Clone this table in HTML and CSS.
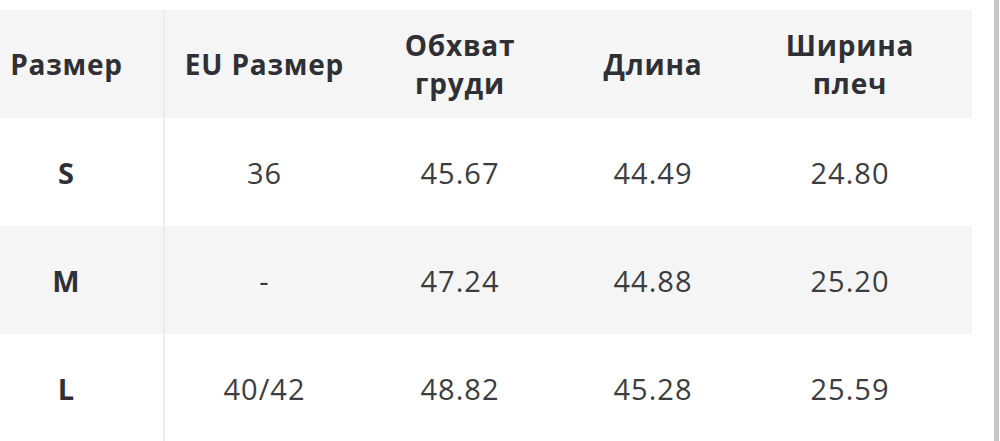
FILE: index.html
```html
<!DOCTYPE html>
<html lang="ru">
<head>
<meta charset="utf-8">
<link rel="stylesheet" href="styles.css">
</head>
<body>
<div class="page">
  <div class="content">
    <table class="sizes">
      <colgroup>
        <col class="c1"><col class="c2"><col class="c3"><col class="c4"><col class="c5">
      </colgroup>
      <thead>
        <tr>
          <th class="first">Размер</th>
          <th>EU Размер</th>
          <th>Обхват<br>груди</th>
          <th>Длина</th>
          <th class="last">Ширина<br>плеч</th>
        </tr>
      </thead>
      <tbody>
        <tr>
          <td class="first size">S</td>
          <td>36</td>
          <td>45.67</td>
          <td>44.49</td>
          <td class="last">24.80</td>
        </tr>
        <tr class="alt">
          <td class="first size">M</td>
          <td>-</td>
          <td>47.24</td>
          <td>44.88</td>
          <td class="last">25.20</td>
        </tr>
        <tr>
          <td class="first size">L</td>
          <td>40/42</td>
          <td>48.82</td>
          <td>45.28</td>
          <td class="last">25.59</td>
        </tr>
      </tbody>
    </table>
  </div>
  <div class="edge"></div>
</div>
</body>
</html>
```
FILE: styles.css
```css
html, body {
  margin: 0;
  padding: 0;
  background: #ffffff;
}
body {
  font-family: "Open Sans", "Noto Sans", sans-serif;
  color: #35363b;
  width: 1000px;
  height: 441px;
  overflow: hidden;
}
.page {
  display: flex;
  height: 441px;
}
.content {
  width: 972px;
  padding-top: 10px;
}
.edge {
  width: 5px;
  margin-left: 22px;
  background: #c6c6c6;
}
.sizes {
  width: 972px;
  border-collapse: collapse;
  table-layout: fixed;
}
.c1 { width: 164px; }
.c2 { width: 200px; }
.c3 { width: 192px; }
.c4 { width: 194px; }
.c5 { width: 222px; }
.sizes th, .sizes td {
  text-align: center;
  vertical-align: middle;
  padding: 0;
}
.sizes th {
  height: 108px;
  background: #f5f5f5;
  font-weight: 700;
  font-size: 28px;
  letter-spacing: 0.8px;
  line-height: 38px;
  color: #2f3035;
}
.sizes td {
  height: 108px;
  font-size: 29px;
  letter-spacing: 1px;
  font-weight: 400;
  color: #3c3d41;
}
.sizes .first {
  padding-right: 30px;
  border-right: 2px solid #ececec;
}
.sizes .last {
  padding-right: 22px;
}
.sizes td.size {
  font-weight: 700;
  color: #2f3035;
}
.sizes tr.alt td {
  background: #f5f5f5;
}
```
